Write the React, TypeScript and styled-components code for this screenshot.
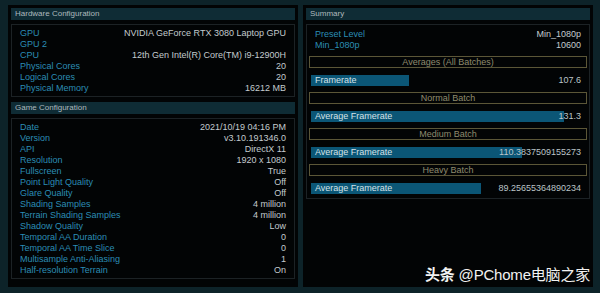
import React from "react"
import styled, { createGlobalStyle } from "styled-components"

type Pair = { label: string; value: string }
type Batch = { title: string; label: string; value: string; width: number }

const hardware: Pair[] = [
    { label: "GPU", value: "NVIDIA GeForce RTX 3080 Laptop GPU" },
    { label: "GPU 2", value: "" },
    { label: "CPU", value: "12th Gen Intel(R) Core(TM) i9-12900H" },
    { label: "Physical Cores", value: "20" },
    { label: "Logical Cores", value: "20" },
    { label: "Physical Memory", value: "16212 MB" },
]

const game: Pair[] = [
    { label: "Date", value: "2021/10/19 04:16 PM" },
    { label: "Version", value: "v3.10.191346.0" },
    { label: "API", value: "DirectX 11" },
    { label: "Resolution", value: "1920 x 1080" },
    { label: "Fullscreen", value: "True" },
    { label: "Point Light Quality", value: "Off" },
    { label: "Glare Quality", value: "Off" },
    { label: "Shading Samples", value: "4 million" },
    { label: "Terrain Shading Samples", value: "4 million" },
    { label: "Shadow Quality", value: "Low" },
    { label: "Temporal AA Duration", value: "0" },
    { label: "Temporal AA Time Slice", value: "0" },
    { label: "Multisample Anti-Aliasing", value: "1" },
    { label: "Half-resolution Terrain", value: "On" },
]

const summary: Pair[] = [
    { label: "Preset Level", value: "Min_1080p" },
    { label: "Min_1080p", value: "10600" },
]

const batches: Batch[] = [
    { title: "Averages (All Batches)", label: "Framerate", value: "107.6", width: 98 },
    { title: "Normal Batch", label: "Average Framerate", value: "131.3", width: 253 },
    { title: "Medium Batch", label: "Average Framerate", value: "110.3837509155273", width: 211 },
    { title: "Heavy Batch", label: "Average Framerate", value: "89.25655364890234", width: 170 },
]

const GlobalStyle = createGlobalStyle`
    html, body {
        margin: 0;
        padding: 0;
        background: #0d2329;
    }
    body {
        font-family: "Liberation Sans", Arial, sans-serif;
    }
`

const Screen = styled.div`
    width: 600px;
    height: 293px;
    box-sizing: border-box;
    padding: 5px 7px 6px 8px;
    display: flex;
    gap: 5px;
    background: #0d2329;
`

const Panel = styled.div`
    position: relative;
    flex: 1;
    background: #020405;
    padding: 3px;
    display: flex;
    flex-direction: column;
    gap: 4px;
`

const Header = styled.div<{ $gap?: number }>`
    height: 12px;
    line-height: 12px;
    background: #0f2c35;
    color: #aeb9bd;
    font-size: 8px;
    padding-left: 4px;
    margin-top: ${p => p.$gap ?? 0}px;
`

const Box = styled.div`
    border: 1px solid #1c2225;
    padding: 3px 8px 2px 8px;
`

const Row = styled.div`
    display: flex;
    justify-content: space-between;
    height: 11px;
    line-height: 11px;
    font-size: 9px;
    white-space: nowrap;
`

const Label = styled.span`
    color: #2b8db4;
`

const Value = styled.span`
    color: #c3cbce;
`

const SummaryBox = styled.div`
    border: 1px solid #1c2225;
    padding: 4px 3px 4px 3px;
    display: flex;
    flex-direction: column;
`

const SummaryRows = styled.div`
    padding: 0 5px;
    margin-bottom: 5px;
`

const BatchTitle = styled.div`
    height: 10px;
    line-height: 10px;
    border: 1px solid #5b5637;
    margin: 0 -1px;
    text-align: center;
    color: #8f8b6e;
    font-size: 9px;
`

const BarRow = styled.div<{ $last?: boolean }>`
    display: grid;
    grid-template-areas: "cell";
    height: 11px;
    margin: 7px 1px ${p => (p.$last ? 0 : 6)}px 1px;
    font-size: 9px;
    line-height: 11px;
    white-space: nowrap;
`

const Bar = styled.div`
    grid-area: cell;
    justify-self: start;
    background: #0b5676;
    color: #d6e2e8;
    padding-left: 4px;
    box-sizing: border-box;
`

const BarValue = styled.span`
    grid-area: cell;
    justify-self: end;
    padding-right: 4px;
    color: #bcc5c8;
`

const Watermark = styled.div`
    position: absolute;
    right: 3px;
    bottom: 3px;
    color: #f2f2f2;
    font-size: 15px;
    font-family: "Liberation Sans", "Noto Sans CJK SC", sans-serif;
    letter-spacing: -0.2px;

    b {
        font-family: "Noto Sans CJK SC", sans-serif;
        font-weight: 700;
    }
`

const Pairs: React.FC<{ items: Pair[] }> = ({ items }) => (
    <>
        {items.map(item => (
            <Row key={item.label}>
                <Label>{item.label}</Label>
                <Value>{item.value}</Value>
            </Row>
        ))}
    </>
)

export default function App() {
    return (
        <Screen>
            <GlobalStyle />
            <Panel>
                <Header>Hardware Configuration</Header>
                <Box>
                    <Pairs items={hardware} />
                </Box>
                <Header $gap={1}>Game Configuration</Header>
                <Box>
                    <Pairs items={game} />
                </Box>
            </Panel>
            <Panel>
                <Header>Summary</Header>
                <SummaryBox>
                    <SummaryRows>
                        <Pairs items={summary} />
                    </SummaryRows>
                    {batches.map((b, i) => (
                        <React.Fragment key={b.title}>
                            <BatchTitle>{b.title}</BatchTitle>
                            <BarRow $last={i === batches.length - 1}>
                                {/* bar width is data, so inline */}
                                <Bar style={{ width: b.width }}>{b.label}</Bar>
                                <BarValue>{b.value}</BarValue>
                            </BarRow>
                        </React.Fragment>
                    ))}
                </SummaryBox>
                <Watermark>
                    <b>头条</b> @PChome电脑之家
                </Watermark>
            </Panel>
        </Screen>
    )
}
